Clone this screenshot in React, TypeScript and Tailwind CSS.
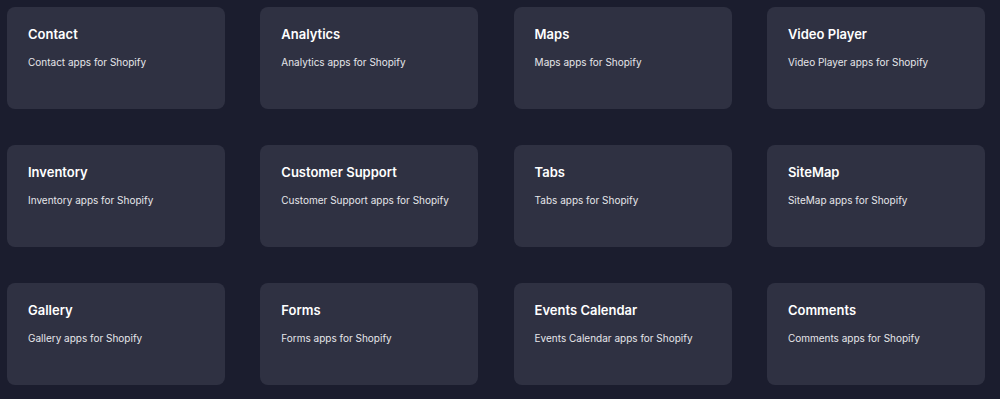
const categories = [
  'Contact',
  'Analytics',
  'Maps',
  'Video Player',
  'Inventory',
  'Customer Support',
  'Tabs',
  'SiteMap',
  'Gallery',
  'Forms',
  'Events Calendar',
  'Comments',
]

function CategoryCard({ name }: { name: string }) {
  return (
    <a
      href="#"
      className="flex h-[102px] flex-col rounded-lg bg-[#2f3142] px-[21px] pt-[19px]"
    >
      <h3 className="text-[13px] font-semibold leading-[17px] whitespace-nowrap text-white">{name}</h3>
      <p className="mt-[12px] text-[10px] leading-[14px] whitespace-nowrap text-[#e6e6ea]">
        {name} apps for Shopify
      </p>
    </a>
  )
}

export default function App() {
  return (
    <div
      className="min-h-[399px] w-full bg-[#1b1d2e] px-[7px] pt-[7px]"
      style={{ fontFamily: 'Inter, "Noto Sans", sans-serif' }}
    >
      <div className="grid grid-cols-[repeat(4,218px)] gap-x-[35.3px] gap-y-[36px]">
        {categories.map((c) => (
          <CategoryCard key={c} name={c} />
        ))}
      </div>
    </div>
  )
}
